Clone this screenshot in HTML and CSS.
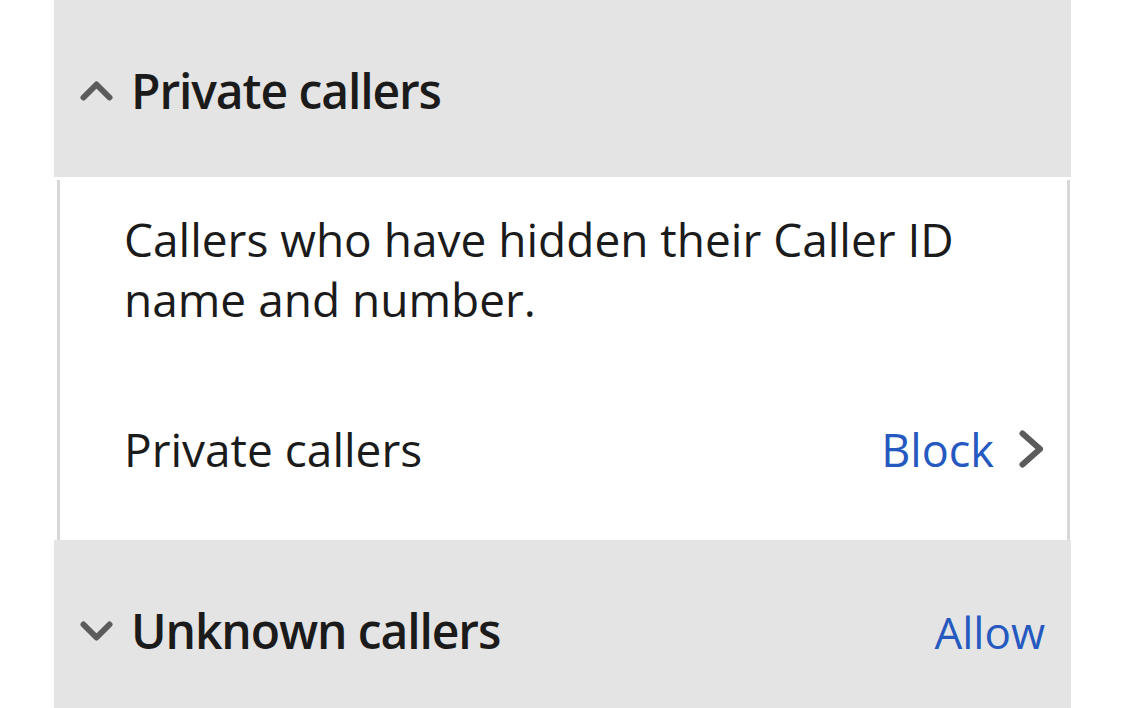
FILE: index.html
```html
<!DOCTYPE html>
<html lang="en">
<head>
<meta charset="utf-8">
<title>Caller settings</title>
<link rel="stylesheet" href="styles.css">
</head>
<body>
<div class="panel">
  <div class="section-header">
    <svg class="chev" width="33" height="20" viewBox="0 0 33 20"><path d="M3.5 16.5 L16.5 3.5 L29.5 16.5" fill="none" stroke="#5b5b5b" stroke-width="6" stroke-linecap="round" stroke-linejoin="round"/></svg>
    <span class="title">Private callers</span>
  </div>
  <div class="content">
    <p class="desc">Callers who have hidden their Caller ID name and number.</p>
    <div class="row">
      <span class="row-label">Private callers</span>
      <span class="row-value">Block</span>
      <svg class="chev-right" width="25" height="38" viewBox="0 0 25 38"><path d="M3.5 3.5 L21 19 L3.5 34.5" fill="none" stroke="#5b5b5b" stroke-width="6" stroke-linecap="round" stroke-linejoin="round"/></svg>
    </div>
  </div>
  <div class="section-header">
    <svg class="chev" width="33" height="20" viewBox="0 0 33 20"><path d="M3.5 3.5 L16.5 16.5 L29.5 3.5" fill="none" stroke="#5b5b5b" stroke-width="6" stroke-linecap="round" stroke-linejoin="round"/></svg>
    <span class="title">Unknown callers</span>
    <span class="header-value">Allow</span>
  </div>
</div>
</body>
</html>
```
FILE: styles.css
```css
html, body {
  margin: 0;
  padding: 0;
  background: #ffffff;
  font-family: "Open Sans", "Noto Sans", sans-serif;
  color: #1b1b1b;
}
.panel {
  margin-left: 54px;
  width: 1017px;
}
.section-header {
  background: #e4e4e4;
  height: 177px;
  display: flex;
  align-items: center;
  padding: 0 26px 0 26px;
  box-sizing: border-box;
}
.chev {
  flex: none;
  margin-right: 18px;
  margin-top: 4px;
}
.title {
  font-size: 48px;
  font-weight: 600;
  flex: 1;
  letter-spacing: -1.1px;
  margin-top: 4px;
}
.header-value {
  font-size: 44px;
  color: #2559bf;
  margin-top: 7px;
}
.content {
  margin: 3px 1px 0 3px;
  border-left: 3px solid #d8d8d8;
  border-right: 3px solid #d8d8d8;
  height: 360px;
  box-sizing: border-box;
  padding: 29px 23px 0 64px;
}
.desc {
  margin: 0;
  font-size: 46px;
  line-height: 60px;
  width: 880px;
}
.row {
  display: flex;
  align-items: center;
  margin-top: 89px;
}
.row-label {
  font-size: 46px;
  flex: 1;
}
.row-value {
  font-size: 45px;
  color: #2559bf;
  margin-right: 25px;
}
.chev-right {
  flex: none;
}
```
